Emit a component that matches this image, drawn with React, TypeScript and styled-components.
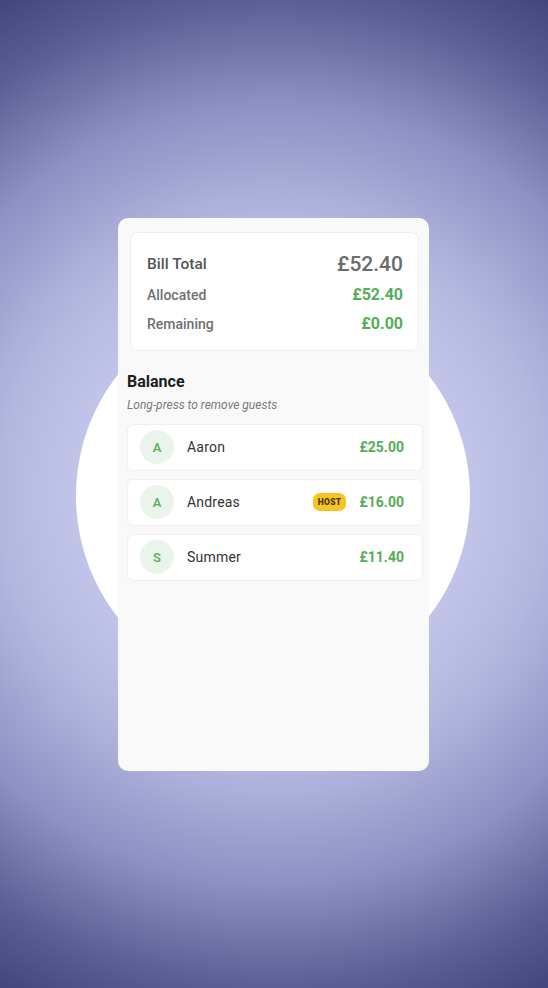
import React from "react";
import styled, { createGlobalStyle } from "styled-components";

const Global = createGlobalStyle`
  html, body { margin: 0; padding: 0; }
  body {
    font-family: Roboto, "Noto Sans", "Liberation Sans", sans-serif;
    -webkit-font-smoothing: antialiased;
  }
  * { box-sizing: border-box; }
`;

const Page = styled.div`
  width: 548px;
  height: 988px;
  display: flex;
  align-items: center;
  padding-left: 118px;
  background: radial-gradient(
    circle 566px at 274px 494px,
    #c8cbee 0px,
    #c1c4e9 200px,
    #b3b7df 275px,
    #8e91c3 390px,
    #5b5e93 494px,
    #42447b 566px
  );
  overflow: hidden;
`;

const Stage = styled.div`
  position: relative;
  width: 311px;
  height: 553px;
`;

const Halo = styled.div`
  position: absolute;
  left: -42px;
  top: 81px;
  width: 394px;
  height: 394px;
  border-radius: 50%;
  background: #ffffff;
`;

const Screen = styled.div`
  position: relative;
  height: 100%;
  background: #f9f9f9;
  border-radius: 10px;
  padding: 14px 7px 0 9px;
  display: flex;
  flex-direction: column;
`;

const Summary = styled.section`
  margin: 0 3px 0 3px;
  background: #ffffff;
  border: 1px solid #eeeeee;
  border-radius: 8px;
  padding: 16px 15px 13px 16px;
  display: flex;
  flex-direction: column;
`;

const SumRow = styled.div<{ $h: number }>`
  display: flex;
  align-items: center;
  justify-content: space-between;
  height: ${(p) => p.$h}px;
`;

const SumLabel = styled.span<{ $strong?: boolean }>`
  font-size: ${(p) => (p.$strong ? 15.5 : 14)}px;
  font-weight: 500;
  color: ${(p) => (p.$strong ? "#555555" : "#707070")};
`;

const SumValue = styled.span<{ $big?: boolean }>`
  font-size: ${(p) => (p.$big ? 21 : 16)}px;
  font-weight: ${(p) => (p.$big ? 500 : 700)};
  color: ${(p) => (p.$big ? "#6b6b6b" : "#55ad58")};
`;

const Heading = styled.h2`
  margin: 21px 0 0;
  font-size: 16px;
  font-weight: 700;
  color: #1c1c1c;
  line-height: 20px;
`;

const Hint = styled.p`
  margin: 5px 0 0;
  font-size: 12px;
  font-style: italic;
  color: #7a7a7a;
  line-height: 16px;
`;

const List = styled.ul`
  list-style: none;
  margin: 11px -1px 0 0;
  padding: 0;
  display: flex;
  flex-direction: column;
  gap: 8px;
`;

const Guest = styled.li`
  height: 47px;
  background: #ffffff;
  border: 1px solid #efefef;
  border-radius: 6px;
  display: flex;
  align-items: center;
  padding: 0 18px 0 12px;
`;

const Avatar = styled.div`
  width: 34px;
  height: 34px;
  border-radius: 50%;
  background: #e9f5ea;
  color: #55ad58;
  font-size: 13px;
  font-weight: 500;
  display: grid;
  place-items: center;
  flex: none;
`;

const Name = styled.span`
  margin-left: 13px;
  font-size: 14px;
  letter-spacing: 0.2px;
  color: #333333;
  flex: 1;
`;

const Badge = styled.span`
  background: #f7c325;
  color: #4a3a05;
  font-size: 8.5px;
  font-weight: 900;
  letter-spacing: 0.3px;
  border-radius: 7px;
  height: 18px;
  padding: 0 5px;
  display: grid;
  place-items: center;
  margin-right: 13px;
`;

const Amount = styled.span`
  font-size: 14px;
  font-weight: 700;
  color: #55ad58;
`;

const guests = [
  { name: "Aaron", amount: "£25.00", host: false },
  { name: "Andreas", amount: "£16.00", host: true },
  { name: "Summer", amount: "£11.40", host: false },
];

export default function App() {
  return (
    <>
      <Global />
      <Page>
        <Stage>
          <Halo />
          <Screen>
            <Summary>
              <SumRow $h={30}>
                <SumLabel $strong>Bill Total</SumLabel>
                <SumValue $big>£52.40</SumValue>
              </SumRow>
              <SumRow $h={32}>
                <SumLabel>Allocated</SumLabel>
                <SumValue>£52.40</SumValue>
              </SumRow>
              <SumRow $h={26}>
                <SumLabel>Remaining</SumLabel>
                <SumValue>£0.00</SumValue>
              </SumRow>
            </Summary>
            <Heading>Balance</Heading>
            <Hint>Long-press to remove guests</Hint>
            <List>
              {guests.map((g) => (
                <Guest key={g.name}>
                  <Avatar>{g.name[0]}</Avatar>
                  <Name>{g.name}</Name>
                  {g.host && <Badge>HOST</Badge>}
                  <Amount>{g.amount}</Amount>
                </Guest>
              ))}
            </List>
          </Screen>
        </Stage>
      </Page>
    </>
  );
}
